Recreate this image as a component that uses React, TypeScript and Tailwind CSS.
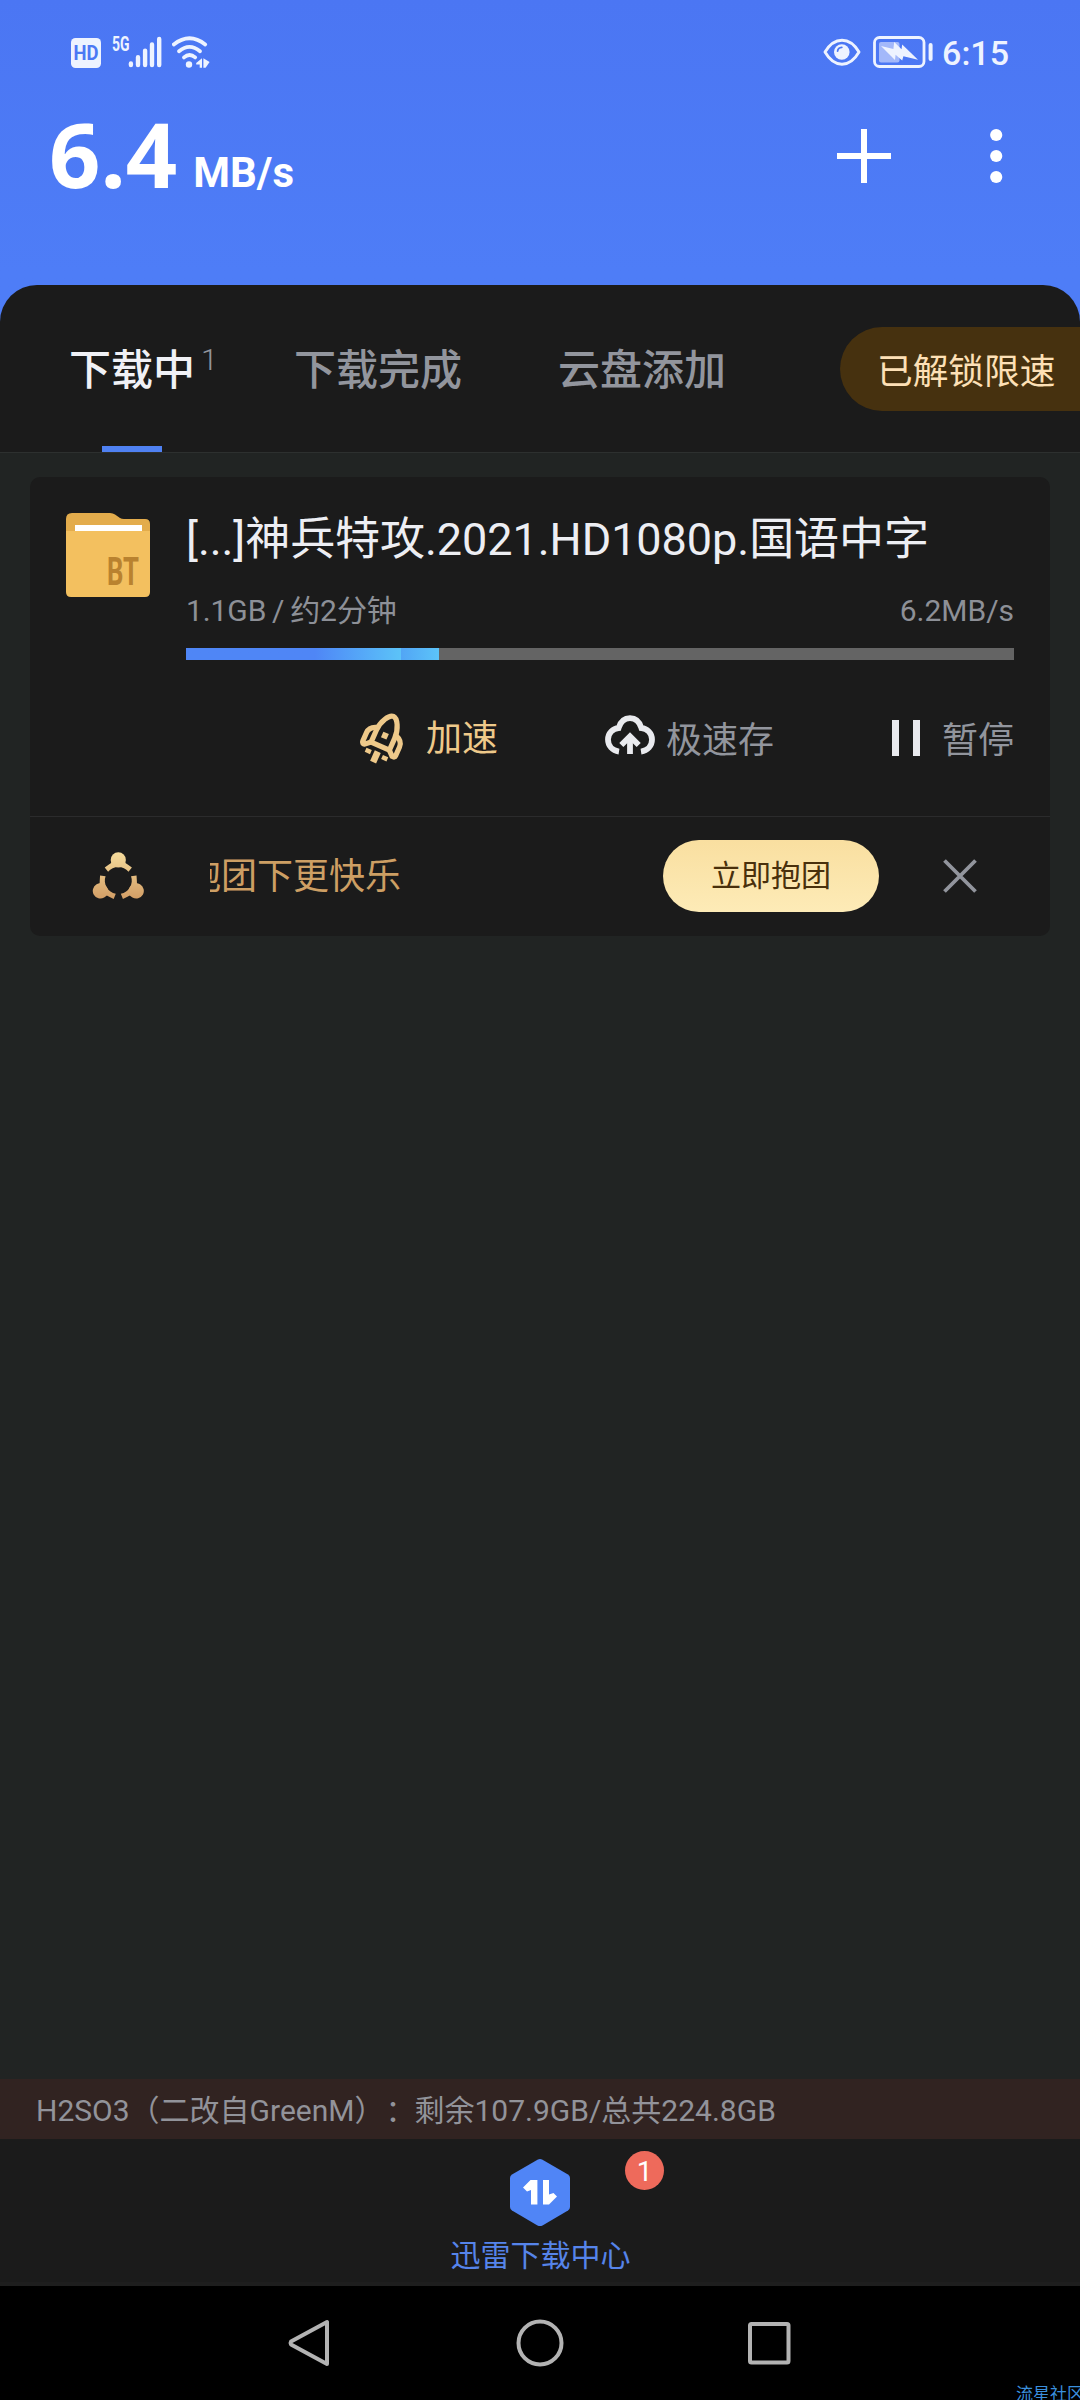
import type { ReactNode } from "react";

function StatusBar() {
  return (
    <div className="flex h-[104px] items-start justify-between pt-9 pl-[71px] pr-[71px] text-[#eef3ff]">
      <div className="flex items-start">
        <svg width="30" height="30" viewBox="0 0 30 30" className="mt-0.5 overflow-visible">
          <rect width="30" height="30" rx="4.5" fill="currentColor" />
          <text x="2.6" y="22" fontSize="19.5" fontWeight="700" fontFamily="Roboto, sans-serif" textLength="25" lengthAdjust="spacingAndGlyphs" fill="#4c78f4">
            HD
          </text>
        </svg>
        <svg width="50" height="32" viewBox="0 0 50 32" className="ml-[11px] overflow-visible">
          <text x="0" y="14.6" fontSize="20" fontWeight="700" fontFamily="Roboto, sans-serif" textLength="17.5" lengthAdjust="spacingAndGlyphs" fill="currentColor">
            5G
          </text>
          <g stroke="currentColor" strokeWidth="4.4" strokeLinecap="round">
            <path d="M18.9 27.4v1.600M26 21.200v7.800M33.100 14.600v14.400M40 8.400v20.600M47.200 3v26" />
          </g>
        </svg>
        <svg width="38" height="32" viewBox="0 0 38 32" className="ml-2.5" fill="none" stroke="currentColor" strokeLinecap="round">
          <path d="M1.800 8.400Q17.500-3.800 33.200 8.400" strokeWidth="3.8" />
          <path d="M7 15.200Q17.500 6.600 28 15.200" strokeWidth="3.8" />
          <path d="M12 21.400Q17.500 16.600 23.200 21.400" strokeWidth="3.8" />
          <circle cx="17" cy="28.500" r="3.200" fill="currentColor" stroke="none" />
          <path d="M24.200 27 30 22.300V31.700H27.700V28.600H24.200zM37.600 26 31.400 22.300V31.700H33.600z" fill="currentColor" stroke="none" />
        </svg>
      </div>
      <div className="flex items-start">
        <svg width="38" height="30" viewBox="0 0 38 30" className="mt-px" fill="none">
          <path d="M2 15Q9 3.200 19 3.200T36 15Q29 27.200 19 27.200T2 15z" stroke="currentColor" strokeWidth="2.9" strokeLinejoin="round" />
          <circle cx="18.800" cy="15" r="7.800" fill="currentColor" />
          <path d="M14.600 14.200Q15 10.600 18.800 10.400" stroke="#4c78f4" strokeWidth="1.8" strokeLinecap="round" />
        </svg>
        <svg width="61" height="32" viewBox="0 0 61 32" className="ml-3" fill="none">
          <rect x="1.500" y="1.500" width="49.500" height="29" rx="5" stroke="currentColor" strokeWidth="2.8" />
          <rect x="6" y="6" width="20.500" height="20.500" rx="2" fill="#a3b8fa" />
          <path d="M8 10 20.400 13 21.200 6 28.500 13.200 29.200 8.400 45 23.800 30.400 20.200 29.200 24.600 22.600 18.800 22 24z" fill="currentColor" />
          <path d="M57.600 9v14" stroke="currentColor" strokeWidth="4" strokeLinecap="round" />
        </svg>
        <span className="ml-2 -mt-[3px] text-[34px] leading-[40px] font-medium">6:15</span>
      </div>
    </div>
  );
}

function SpeedHeader() {
  return (
    <div className="flex h-[181px] items-start justify-between pl-[49px]">
      <div className="-mt-px flex items-baseline leading-[100px] font-bold text-white">
        <span className="font-['Noto_Sans'] text-[90px]">6.4</span>
        <span className="relative -top-px ml-[16px] text-[42px]">MB/s</span>
      </div>
      <div className="mt-[22px] flex pr-[72px]">
        <svg width="60" height="60" viewBox="0 0 60 60" className="mr-[96px]">
          <path d="M30 3v54M3 30h54" stroke="#fff" strokeWidth="6" />
        </svg>
        <svg width="18" height="60" viewBox="0 0 18 60" fill="#fff">
          <circle cx="6.200" cy="9" r="6.100" />
          <circle cx="6.200" cy="30" r="6.100" />
          <circle cx="6.200" cy="51" r="6.100" />
        </svg>
      </div>
    </div>
  );
}

function Tabs() {
  return (
    <div className="flex h-[168px] items-start overflow-hidden rounded-t-[37px] border-b border-[#2d302f] bg-[#1b1b1b] pl-[69px] text-[42px] leading-[60px] font-medium text-[#92959d]">
      <div className="flex h-[167px] w-[225px] flex-col justify-between pt-[56px]">
        <div className="flex items-start text-[#f0f1f6]">
          下载中
          <sup className="top-0 ml-[6px] mt-px text-[30px] leading-[36px] font-light text-[#92959d]">1</sup>
        </div>
        <div className="ml-[33px] h-1.5 w-[60px] bg-[#4f81f2]" />
      </div>
      <div className="w-[264px] pt-[56px]">下载完成</div>
      <div className="w-[282px] pt-[56px]">云盘添加</div>
      <div className="mt-[42px] flex h-[84px] flex-1 items-center rounded-l-full bg-[#46310f] pt-1.5 pl-[37px] text-[35.7px] font-normal whitespace-nowrap text-[#fde0b6]">
        已解锁限速
      </div>
    </div>
  );
}

function FolderIcon() {
  return (
    <svg width="84" height="84" viewBox="0 0 84 84" className="mt-9 shrink-0 overflow-visible">
      <path d="M0 6Q0 0 6 0H44Q47 0 49 1.600L54 5Q55.500 6 58 6H79Q84 6 84 11V40H0z" fill="#e3ac4c" />
      <path d="M0 18H84V79Q84 84 79 84H5Q0 84 0 79z" fill="#f3c05f" />
      <rect x="9" y="12" width="67" height="6" fill="#fff" />
      <text x="41" y="72" fontSize="38" fontWeight="700" fontFamily="Roboto, sans-serif" textLength="32" lengthAdjust="spacingAndGlyphs" fill="#b9822f">
        BT
      </text>
    </svg>
  );
}

function RocketIcon() {
  return (
    <svg width="50" height="54" viewBox="0 0 50 54" fill="none" stroke="#eec98a" strokeWidth="5.2" strokeLinejoin="round" className="overflow-visible">
      <g transform="translate(25.300 25) rotate(24)">
        <path d="M0-22.500C-4.500-22.500-10-13-10-3V10H10V-3C10-13 4.500-22.500 0-22.500z" />
        <path d="M-10-6C-15-4.500-18-1-18 3V12.500Q-18 15-15 14.500L-10 10" />
        <path d="M10-6C15-4.500 18-1 18 3V12.500Q18 15 15 14.500L10 10" />
        <rect x="-3" y="-4.500" width="6" height="6" fill="#eec98a" stroke="none" />
        <path d="M0 16V27.500" strokeWidth="6.500" />
        <path d="M-9 17V21.500M9 17V21.500" strokeWidth="5.800" />
      </g>
    </svg>
  );
}

function CloudIcon() {
  return (
    <svg width="50" height="40" viewBox="0 0 50 40" fill="none" stroke="#e9eaee" strokeWidth="5.800">
      <path d="M14 36.600C7.500 35.600 3 31 3 24.600C3 18 8 13.600 13.600 13C15.600 6.500 19.600 3.200 25 3.200S34.400 6.500 36.400 13C42 13.600 47 18 47 24.600C47 31 42.500 35.600 36 36.600" />
      <path d="M25 39V22" />
      <path d="M16.300 30 25 21.400 33.700 30" />
    </svg>
  );
}

function GroupIcon() {
  const person: ReactNode = (
    <>
      <circle cx="0" cy="-20.700" r="7.600" />
      <path d="M-13.600-13.200-9.400-16Q-7-17.200-6.500-18.500H6.500Q7-17.200 9.400-16L13.600-13.200 10.200-8.800A13.400 13.400 0 0 0-10.200-8.800z" />
    </>
  );
  return (
    <svg width="54" height="50" viewBox="0 0 54 50" className="shrink-0">
      <defs>
        <linearGradient id="gold" gradientUnits="userSpaceOnUse" x1="0" y1="0" x2="0" y2="50">
          <stop offset="0" stopColor="#f6dc9c" />
          <stop offset="1" stopColor="#d09a62" />
        </linearGradient>
        <mask id="people">
          <g fill="#fff" transform="translate(27.300 28.600)">
            {person}
            <g transform="rotate(120)">{person}</g>
            <g transform="rotate(240)">{person}</g>
          </g>
        </mask>
      </defs>
      <rect width="54" height="50" fill="url(#gold)" mask="url(#people)" />
    </svg>
  );
}

function DownloadCard() {
  return (
    <section className="mx-[30px] mt-6 flex h-[459px] flex-col rounded-[10px] bg-[#1b1b1b]">
      <div className="flex h-[190px] pl-9 pr-9">
        <FolderIcon />
        <div className="ml-9 flex-1 pt-[35px]">
          <div className="h-[58px] text-[45px] leading-[56px] tracking-[-0.05px] whitespace-nowrap text-[#edeef3]">[...]神兵特攻.2021.HD1080p.国语中字</div>
          <div className="mt-[23px] flex h-[36px] justify-between text-[30px] leading-[36px] text-[#8d9097]">
            <span className="[word-spacing:-1.500px] tracking-[-0.1px]">1.1GB / 约2分钟</span>
            <span>6.2MB/s</span>
          </div>
          <div className="mt-[19px] flex h-3 bg-[#646464]">
            <div className="w-[215px] bg-linear-to-r from-[#4f86f6] from-60% to-[#5cc3f8]" />
            <div className="w-[38px] bg-linear-to-r from-[#52a5f5] to-[#5cc4f9]" />
          </div>
        </div>
      </div>
      <div className="flex h-[149px] items-start justify-end pt-[45px] pr-9 text-[36px] leading-[54px] text-[#92959d]">
        <div className="flex text-[#eec98a]">
          <RocketIcon />
          <span className="ml-[17px]">加速</span>
        </div>
        <div className="ml-[107px] flex">
          <div className="mt-[3px]">
            <CloudIcon />
          </div>
          <span className="mt-0.5 ml-[11px]">极速存</span>
        </div>
        <div className="ml-[118px] flex">
          <div className="mt-2 flex h-9 gap-[14px]">
            <div className="w-[7px] bg-[#e9eaee]" />
            <div className="w-[7px] bg-[#e9eaee]" />
          </div>
          <span className="mt-0.5 ml-[22px]">暂停</span>
        </div>
      </div>
      <div className="flex h-[120px] items-center border-t border-[#2b2b2c] pl-[61px]">
        <GroupIcon />
        <div className="ml-[65px] flex w-[191px] justify-end overflow-hidden text-[36px] leading-[54px] whitespace-nowrap text-[#cd9f64]">
          抱团下更快乐
        </div>
        <button className="relative -top-px ml-[262px] h-[72px] w-[216px] rounded-full bg-linear-to-b from-[#f9dfa0] to-[#fdebb7] text-[30px] leading-[71px] text-[#49300c]">
          立即抱团
        </button>
        <svg width="34" height="34" viewBox="0 0 34 34" className="mb-px ml-16">
          <path d="M1.500 1.500 32.500 32.500M32.500 1.500 1.500 32.500" stroke="#92959d" strokeWidth="3.800" />
        </svg>
      </div>
    </section>
  );
}

function DownloadCenter() {
  return (
    <div className="flex h-[147px] flex-col items-center border-b-4 border-[#1e1e1e] bg-[#1b1b1b] pt-5">
      <div className="relative">
        <svg width="60" height="68" viewBox="0 0 60 68">
          <path d="M27.500.700Q30-.700 32.500.700L58 15.500Q60 16.700 60 19V48Q60 50.300 58 51.500L32.500 66.400Q30 67.800 27.500 66.400L2 51.500Q0 50.300 0 48V19Q0 16.700 2 15.500z" fill="#5085f6" />
          <path d="M27.400 21V45.500H21V31L17 32.500 13 28.500 20.500 21zM33 21H39V35.500L43.500 34 47 37.500 39 45.500H33z" fill="#fff" />
        </svg>
        <div className="absolute top-[-8px] left-[115px] flex size-[39px] items-center justify-center rounded-full bg-[#ee6a5b] pt-0.5 text-[28px] leading-none text-white">
          1
        </div>
      </div>
      <div className="mt-[7px] ml-px text-[30px] leading-[44px] text-[#5684ea]">迅雷下载中心</div>
    </div>
  );
}

function AndroidNav() {
  return (
    <div className="relative flex h-[114px] items-start overflow-hidden bg-black pt-8 pl-[287px]">
      <svg width="46" height="50" viewBox="0 0 46 50" fill="none" stroke="#b3b3b3" strokeWidth="4">
        <path d="M40 4V46L4 26.500Q3 25 4 23.500z" strokeLinejoin="round" />
      </svg>
      <svg width="50" height="50" viewBox="0 0 50 50" fill="none" stroke="#b3b3b3" strokeWidth="4" className="ml-[182px]">
        <circle cx="25" cy="25" r="21.500" />
      </svg>
      <svg width="50" height="50" viewBox="0 0 50 50" fill="none" stroke="#b3b3b3" strokeWidth="4" className="ml-[179px]">
        <rect x="6" y="6" width="38.500" height="38.500" rx="1.500" />
      </svg>
      <div className="absolute top-[96px] left-[1016px] text-[17px] leading-[24px] whitespace-nowrap text-[#3b8fdd]">流星社区</div>
    </div>
  );
}

export default function App() {
  return (
    <main className="flex h-[2400px] w-[1080px] flex-col overflow-hidden bg-[#212423] font-[Roboto,'Noto_Sans_CJK_SC',sans-serif]" lang="zh-CN">
      <header className="bg-linear-to-b from-[#4b76f3] to-[#4e7df7] to-60%">
        <StatusBar />
        <SpeedHeader />
        <Tabs />
      </header>
      <DownloadCard />
      <div className="flex-1" />
      <div className="flex h-[60px] bg-[#312321] pl-[36px] text-[30px] leading-[63px] whitespace-nowrap text-[#92939a] [text-spacing-trim:space-all]">
        <span>H2SO3（二改自GreenM）</span>
        <span className="relative left-px">：</span>
        <span>剩余107.9GB/总共224.8GB</span>
      </div>
      <DownloadCenter />
      <AndroidNav />
    </main>
  );
}
